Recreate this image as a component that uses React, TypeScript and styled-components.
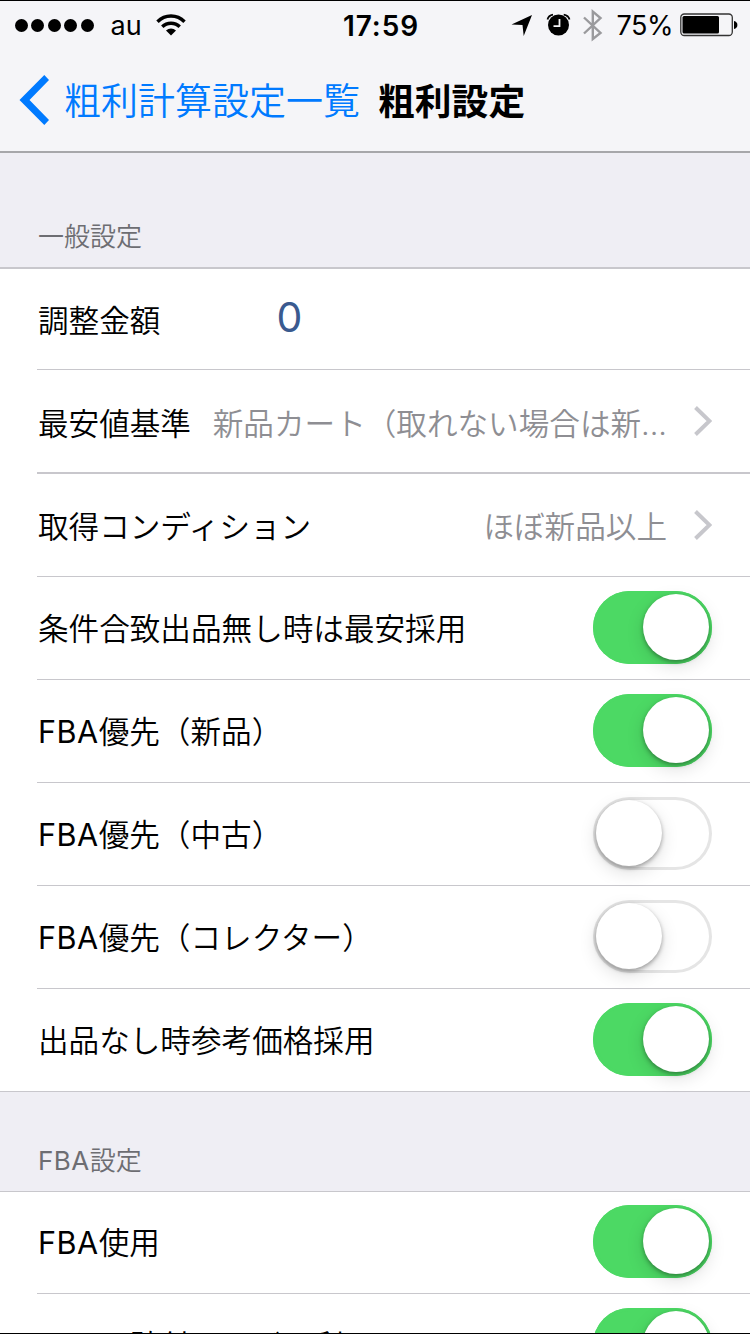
import React from "react";
import styled, { createGlobalStyle } from "styled-components";

const Global = createGlobalStyle`
  *, *::before, *::after { box-sizing: border-box; }
  body { margin: 0; background: #efeef4; }
`;

const Screen = styled.div`
  width: 750px;
  height: 1334px;
  overflow: hidden;
  display: flex;
  flex-direction: column;
  background: #efeef4;
  border-top: 1px solid #000;
  border-bottom: 1px solid #000;
  color: #000;
  font-family: Inter, "Noto Sans CJK JP", sans-serif;
  font-weight: 350;
`;

const Header = styled.header`
  flex: none;
  height: 152px;
  background: #f5f5f8;
  border-bottom: 2px solid #a7a7aa;
`;

const StatusBar = styled.div`
  height: 48px;
  padding: 0 12px 0 15px;
  display: grid;
  grid-template-columns: 1fr auto 1fr;
  align-items: center;
`;

const StatusGroup = styled.div<{ $end?: boolean }>`
  display: flex;
  align-items: center;
  justify-content: ${(p) => (p.$end ? "flex-end" : "flex-start")};
`;

const Dots = styled.div`
  display: flex;
  gap: 3.4px;
  margin-right: 17px;
`;

const Dot = styled.span`
  width: 13px;
  height: 13px;
  border-radius: 50%;
  background: #000;
`;

const Carrier = styled.span`
  padding-top: 2px;
  font-size: 27px;
  line-height: 32px;
  font-weight: 400;
  margin-right: 14px;
`;

const Clock = styled.time`
  padding: 2px 0 0 9px;
  font-size: 28px;
  line-height: 32px;
  font-weight: 600;
  letter-spacing: 0.9px;
`;

const Percent = styled.span`
  padding-top: 2px;
  font-size: 27px;
  line-height: 32px;
  font-weight: 400;
  letter-spacing: -0.5px;
  margin: 0 7px 0 14px;
`;

const NavBar = styled.nav`
  height: 102px;
  padding: 0 0 0 19px;
  display: flex;
  align-items: center;
`;

const BackText = styled.span`
  margin-left: 15px;
  padding-top: 4px;
  color: #007aff;
  font-size: 37px;
  line-height: 50px;
  white-space: nowrap;
`;

const Title = styled.h1`
  margin: 0 0 0 18px;
  padding-top: 4px;
  font-size: 36.8px;
  line-height: 50px;
  font-weight: 700;
  white-space: nowrap;
`;

const SectionHead = styled.h2<{ $height: number }>`
  flex: none;
  height: ${(p) => p.$height}px;
  margin: 0;
  padding: 0 38px 13px;
  display: flex;
  align-items: flex-end;
  font-size: 26px;
  line-height: 34px;
  font-weight: 350;
  color: #6d6d72;
`;

const List = styled.div<{ $top: number }>`
  flex: none;
  background: #fff;
  border-top: ${(p) => p.$top}px solid #c8c7cc;
`;

const Row = styled.div<{ $height: number; $line?: number; $last?: boolean }>`
  height: ${(p) => p.$height}px;
  margin-left: ${(p) => (p.$last ? 0 : 37)}px;
  padding: 0 38px 0 ${(p) => (p.$last ? 38 : 1)}px;
  border-bottom: ${(p) => p.$line ?? 1}px solid #c8c7cc;
  display: flex;
  align-items: center;
`;

const Label = styled.span<{ $drop?: number }>`
  flex: none;
  padding-top: ${(p) => p.$drop ?? 1.5}px;
  font-size: 30.6px;
  line-height: 44px;
  white-space: nowrap;
`;

const Latin = styled.span`
  font-weight: 400;
  letter-spacing: 0.5px;
`;

const Amount = styled.span`
  width: 340px;
  margin: -4px 0 0 116px;
  color: #3a5a8f;
  font-size: 41px;
  line-height: 46px;
  font-weight: 400;
`;

const Value = styled.span<{ $drop: number }>`
  flex: 1;
  margin-left: 20px;
  margin-right: 27px;
  padding-top: ${(p) => p.$drop}px;
  color: #8e8e93;
  font-size: 30.6px;
  line-height: 44px;
  text-align: right;
  white-space: nowrap;
`;

const Track = styled.span<{ $on: boolean }>`
  flex: none;
  width: 119px;
  height: 73px;
  margin: 0 0 2px auto;
  padding: 3px;
  border-radius: 37px;
  display: flex;
  justify-content: ${(p) => (p.$on ? "flex-end" : "flex-start")};
  background: ${(p) => (p.$on ? "#4cd964" : "#fff")};
  box-shadow: inset 0 0 0 3px ${(p) => (p.$on ? "#4cd964" : "#e5e5e5")};
`;

const Knob = styled.span`
  width: 66px;
  height: 66px;
  border-radius: 50%;
  background: #fff;
  box-shadow: 0 2px 4px rgba(0, 0, 0, 0.34), 0 6px 18px rgba(0, 0, 0, 0.13);
`;

const Switch = ({ on }: { on: boolean }) => (
  <Track $on={on} role="switch" aria-checked={on}>
    <Knob />
  </Track>
);

const Chevron = () => (
  <svg width="18" height="30" viewBox="0 0 18 30" fill="none" stroke="#c7c7cc" strokeWidth="4">
    <path d="M1.5 1.5L15.5 15L1.5 28.5" />
  </svg>
);

const BackArrow = () => (
  <svg width="30" height="50" viewBox="0 0 30 50" fill="#007aff">
    <path d="M25.3 0L30 5L10.5 25L30 45L25.3 50L0.5 25Z" />
  </svg>
);

const Wifi = () => (
  <svg width="30" height="22" viewBox="0 0 30 22" fill="none" stroke="#000" strokeWidth="3.4">
    <path d="M1.5 7.8C9 0 21 0 28.5 7.8" />
    <path d="M6.3 12.8C11 8 19 8 23.7 12.8" />
    <path d="M10 16.6C13 13.7 17 13.7 20 16.6L15 21.5Z" fill="#000" stroke="none" />
  </svg>
);

const StatusIcons = () => (
  <svg width="92" height="34" viewBox="511 8 92 34">
    <path d="M511.5 24.5L532 15L523.7 36L522.5 25Z" fill="#000" />
    <circle cx="558.5" cy="25" r="10.5" fill="#000" />
    <path
      d="M547.5 19.5Q548.5 15.5 553 14.7M563.7 14.7Q568.5 15.5 569.5 19.5"
      fill="none"
      stroke="#000"
      strokeWidth="1.8"
    />
    <path d="M559.5 19V26.2H553.5" fill="none" stroke="#f5f5f8" strokeWidth="1.8" />
    <path
      d="M584 17.5L600.5 33L592.8 39V11.5L600.5 18L584 33.5"
      fill="none"
      stroke="#9a9a9d"
      strokeWidth="2.4"
    />
  </svg>
);

const Battery = () => (
  <svg width="58" height="24" viewBox="0 0 58 24">
    <rect x="0.8" y="1" width="51.5" height="21.5" rx="3.5" fill="none" stroke="#333" strokeWidth="1.3" />
    <rect x="2.5" y="3" width="36.5" height="17.5" rx="1.5" fill="#000" />
    <path d="M54 8C58.5 8.5 58.5 15.5 54 16Z" fill="#000" />
  </svg>
);

const switches: { prefix?: string; label: string; on: boolean }[] = [
  { label: "条件合致出品無し時は最安採用", on: true },
  { prefix: "FBA", label: "優先（新品）", on: true },
  { prefix: "FBA", label: "優先（中古）", on: false },
  { prefix: "FBA", label: "優先（コレクター）", on: false },
  { label: "出品なし時参考価格採用", on: true },
];

export default function App() {
  return (
    <>
      <Global />
      <Screen>
        <Header>
          <StatusBar>
            <StatusGroup>
              <Dots>
                {[0, 1, 2, 3, 4].map((i) => (
                  <Dot key={i} />
                ))}
              </Dots>
              <Carrier>au</Carrier>
              <Wifi />
            </StatusGroup>
            <Clock>17:59</Clock>
            <StatusGroup $end>
              <StatusIcons />
              <Percent>75%</Percent>
              <Battery />
            </StatusGroup>
          </StatusBar>
          <NavBar>
            <BackArrow />
            <BackText>粗利計算設定一覧</BackText>
            <Title>粗利設定</Title>
          </NavBar>
        </Header>

        <SectionHead $height={114}>一般設定</SectionHead>
        <List $top={2}>
          <Row $height={101}>
            <Label $drop={3}>調整金額</Label>
            <Amount>0</Amount>
          </Row>
          <Row $height={104} $line={2}>
            <Label $drop={5}>最安値基準</Label>
            <Value $drop={5}>新品カート（取れない場合は新...</Value>
            <Chevron />
          </Row>
          <Row $height={103}>
            <Label $drop={3}>取得コンディション</Label>
            <Value $drop={3}>ほぼ新品以上</Value>
            <Chevron />
          </Row>
          {switches.map((s, i) => (
            <Row key={s.label} $height={103} $last={i === switches.length - 1}>
              <Label>
                {s.prefix && <Latin>{s.prefix}</Latin>}
                {s.label}
              </Label>
              <Switch on={s.on} />
            </Row>
          ))}
        </List>

        <SectionHead $height={99}>
          <Latin>FBA</Latin>設定
        </SectionHead>
        <List $top={1}>
          <Row $height={102}>
            <Label>
              <Latin>FBA</Latin>使用
            </Label>
            <Switch on />
          </Row>
          <Row $height={103}>
            <Label>ラベル貼付サービス利用</Label>
            <Switch on />
          </Row>
        </List>
      </Screen>
    </>
  );
}
